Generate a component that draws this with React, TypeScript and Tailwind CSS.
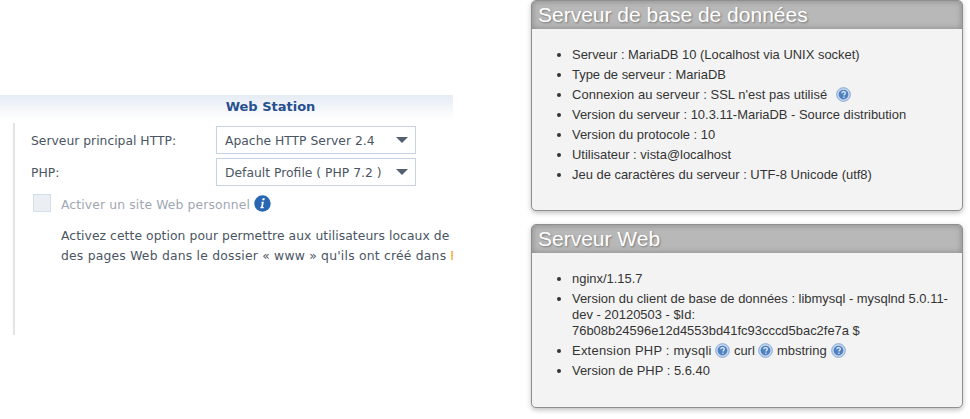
import type { ReactNode } from "react"

function HelpIcon({ className = "" }: { className?: string }) {
  return (
    <svg className={`${className} inline-block align-[-3px] w-[15px] h-[15px]`} viewBox="0 0 16 16">
      <circle cx="8" cy="8" r="7.3" fill="#c6d8ee" stroke="#7fa3d2" strokeWidth="1" />
      <circle cx="8" cy="8" r="5.2" fill="#4f80bf" />
      <path d="M6.2 6.7c0-1.2.8-1.8 1.9-1.8s1.9.7 1.9 1.6c0 1.2-1.5 1.3-1.5 2.6" fill="none" stroke="#e8f0fa" strokeWidth="1.3" />
      <rect x="7.7" y="10.2" width="1.4" height="1.4" fill="#e8f0fa" />
    </svg>
  )
}

function InfoIcon() {
  return (
    <svg className="w-[17px] h-[17px] shrink-0" viewBox="0 0 17 17">
      <circle cx="8.5" cy="8.5" r="8.2" fill="#2a67b3" />
      <path d="M8.6 3.2h2.2l-.4 2h-2.2zM7.6 6.7h2.3l-1.1 5.2h1.1l-.3 1.4H6.2l.3-1.4h.6l.8-3.8h-.6z" fill="#fff" />
    </svg>
  )
}

function Select({ label }: { label: string }) {
  return (
    <div className="w-[200px] h-[28px] border border-[#c6d2e0] flex items-center justify-between pl-2 pr-[7px] text-[12.35px] text-[#4a5563]">
      <span className="whitespace-nowrap pt-[2px]">{label}</span>
      <span className="w-0 h-0 border-x-[6px] border-x-transparent border-t-[6px] border-t-[#55606e]" />
    </div>
  )
}

function Panel({ title, className, children }: { title: string; className: string; children: ReactNode }) {
  return (
    <section className={`${className} rounded-[5px] border border-[#8f8f8f] bg-[#f3f3f3] shadow-[0_2px_5px_rgba(0,0,0,0.25)] overflow-hidden`}>
      <h2 className="h-[28px] bg-[#b8b8b8] shadow-[inset_0_0_6px_rgba(0,0,0,0.28)] px-[6px] text-[21px] leading-[28px] text-white [text-shadow:1px_1px_2px_rgba(0,0,0,0.35)]">
        {title}
      </h2>
      <ul className="list-disc pl-[40px] pr-2 pt-[18px] text-[12.95px] leading-[16px] text-[#333] [&>li]:mb-[4px]">{children}</ul>
    </section>
  )
}

export default function App() {
  return (
    <div className="w-[970px] h-[419px] overflow-hidden bg-white flex font-['Liberation_Sans',sans-serif]">
      <div className="w-[453px] pt-[95px] shrink-0 overflow-hidden font-['DejaVu_Sans',sans-serif]">
        <div className="h-[25px] bg-[linear-gradient(#e6ecf4,#ffffff)] pl-[88px] text-center text-[13px] leading-[23px] font-bold text-[#27508f]">
          Web Station
        </div>
        <div className="ml-[13px] mt-[3px] h-[212px] border-l-2 border-[#e4e4e4] pl-4 pt-[3px] text-[12.35px] text-[#4a5563]">
          <div className="flex items-center h-[28px] mb-[4px]">
            <span className="w-[185px] pt-[2px]">Serveur principal HTTP:</span>
            <Select label="Apache HTTP Server 2.4" />
          </div>
          <div className="flex items-center h-[28px]">
            <span className="w-[185px] pt-[2px]">PHP:</span>
            <Select label="Default Profile ( PHP 7.2 )" />
          </div>
          <div className="flex items-center mt-[8px] h-[18px]">
            <span className="w-[18px] h-[18px] ml-[2px] mr-[10px] border border-[#d5dfea] bg-[#ebeff4]" />
            <span className="text-[#a0a7b2] whitespace-nowrap tracking-[0.14px] mr-1 pt-[5px]">Activer un site Web personnel</span>
            <InfoIcon />
          </div>
          <p className="ml-[30px] mt-[14px] leading-[20px] whitespace-nowrap">
            <span className="tracking-[0.065px]">Activez cette option pour permettre aux utilisateurs locaux de</span>
            <br />
            <span className="tracking-[0.22px]">des pages Web dans le dossier « www » qu'ils ont créé dans</span>{" "}
            <span className="text-[#f0a030]">File Station</span>
          </p>
        </div>
      </div>

      <div className="pl-[78px] flex flex-col">
        <Panel title="Serveur de base de données" className="w-[432px] h-[211px]">
          <li>Serveur : MariaDB 10 (Localhost via UNIX socket)</li>
          <li>Type de serveur : MariaDB</li>
          <li><span className="tracking-[0.05px]">Connexion au serveur : SSL n'est pas utilisé</span> &nbsp;<HelpIcon className="ml-[2px]" /></li>
          <li>Version du serveur : 10.3.11-MariaDB - Source distribution</li>
          <li>Version du protocole : 10</li>
          <li>Utilisateur : vista@localhost</li>
          <li>Jeu de caractères du serveur : UTF-8 Unicode (utf8)</li>
        </Panel>
        <Panel title="Serveur Web" className="w-[432px] h-[184px] mt-[13px]">
          <li>nginx/1.15.7</li>
          <li>Version du client de base de données : libmysql - mysqlnd 5.0.11-dev - 20120503 - $Id: 76b08b24596e12d4553bd41fc93cccd5bac2fe7a $</li>
          <li>
            <span className="tracking-[0.25px]">Extension PHP : mysqli</span> <HelpIcon /> curl <HelpIcon /> mbstring <HelpIcon className="ml-[1px]" />
          </li>
          <li>Version de PHP : 5.6.40</li>
        </Panel>
      </div>
    </div>
  )
}
